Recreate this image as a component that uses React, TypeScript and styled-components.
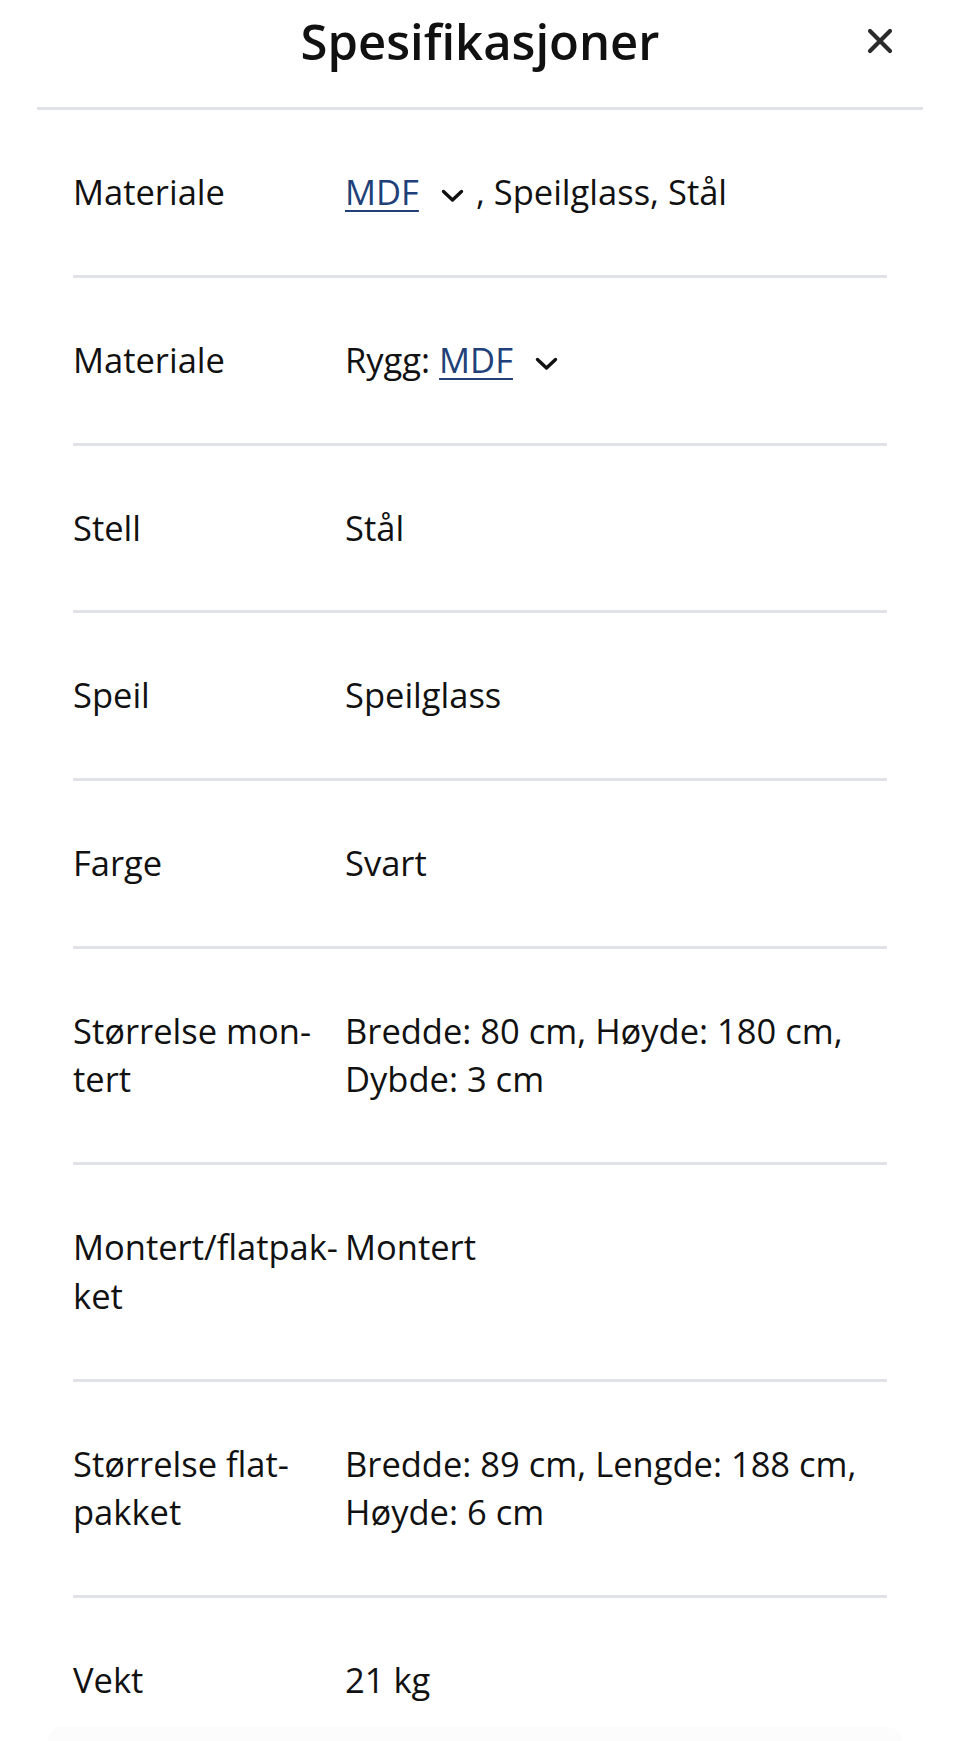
import React from "react";
import styled, { createGlobalStyle } from "styled-components";

const Global = createGlobalStyle`
  html, body { margin: 0; padding: 0; background: #fff; }
  body {
    font-family: "Open Sans", "Noto Sans", "DejaVu Sans", sans-serif;
    color: #111;
    -webkit-font-smoothing: antialiased;
  }
`;

const Page = styled.div`
  width: 960px;
  min-height: 1741px;
  background: #fff;
`;

const Header = styled.header`
  display: grid;
  grid-template-columns: 1fr auto 1fr;
  align-items: center;
  align-content: start;
  padding: 8px 67px 0 67px;
  height: 107px;
  box-sizing: border-box;
`;

const Title = styled.h1`
  grid-column: 2;
  margin: 0;
  font-size: 49px;
  font-weight: 600;
  line-height: 66px;
  color: #111;
`;

const CloseButton = styled.button`
  grid-column: 3;
  justify-self: end;
  width: 26px;
  height: 26px;
  padding: 0;
  border: none;
  background: none;
  display: flex;
  align-items: center;
  justify-content: center;
  color: #2b2b2b;
  cursor: pointer;
`;

const HeaderRule = styled.hr`
  margin: 0 37px;
  border: none;
  height: 3px;
  background: #e1e2e8;
`;

const List = styled.dl`
  margin: 0;
  padding: 0 73px;
`;

const Row = styled.div`
  display: grid;
  grid-template-columns: 272px 1fr;
  padding: 58px 0 58.3px;
  border-bottom: 3px solid #e1e2e8;
  font-size: 34.5px;
  line-height: 48.5px;
`;

const Label = styled.dt`
  margin: 0;
  hyphens: manual;
  padding-right: 4px;
`;

const Value = styled.dd`
  margin: 0;
`;

const Link = styled.a`
  color: #213f78;
  text-decoration: underline;
  text-decoration-thickness: 2px;
  text-underline-offset: 5px;
`;

const ChevronWrap = styled.span<{ $after: number }>`
  display: inline-flex;
  align-items: center;
  margin: 0 ${(p) => p.$after}px 0 22px;
  vertical-align: 2px;
`;

const Footer = styled.div`
  position: fixed;
  left: 48px;
  right: 58px;
  bottom: 0;
  height: 14px;
  background: #fcfcfc;
  border-radius: 18px 18px 0 0;
`;

const Chevron: React.FC<{ after?: number }> = ({ after = 0 }) => (
  <ChevronWrap $after={after}>
    <svg width="23" height="14" viewBox="0 0 23 14" aria-hidden="true">
      <polyline
        points="2.5,2.5 11.5,11 20.5,2.5"
        fill="none"
        stroke="#111"
        strokeWidth="3.4"
        strokeLinecap="round"
        strokeLinejoin="round"
      />
    </svg>
  </ChevronWrap>
);

const CloseIcon = () => (
  <svg width="26" height="26" viewBox="0 0 26 26" aria-hidden="true">
    <path
      d="M3 3 L23 23 M23 3 L3 23"
      stroke="currentColor"
      strokeWidth="4.2"
      strokeLinecap="round"
    />
  </svg>
);

type Spec = { label: string; value: React.ReactNode };

const specs: Spec[] = [
  {
    label: "Materiale",
    value: (
      <>
        <Link href="#">MDF</Link>
        <Chevron after={12} />, Speilglass, Stål
      </>
    ),
  },
  {
    label: "Materiale",
    value: (
      <>
        Rygg: <Link href="#">MDF</Link>
        <Chevron />
      </>
    ),
  },
  { label: "Stell", value: "Stål" },
  { label: "Speil", value: "Speilglass" },
  { label: "Farge", value: "Svart" },
  {
    label: "Størrelse mon\u00ADtert",
    value: "Bredde: 80 cm, Høyde: 180 cm, Dybde: 3 cm",
  },
  { label: "Montert/flatpak\u00ADket", value: "Montert" },
  {
    label: "Størrelse flat\u00ADpakket",
    value: "Bredde: 89 cm, Lengde: 188 cm, Høyde: 6 cm",
  },
  { label: "Vekt", value: "21 kg" },
];

export default function App() {
  return (
    <Page lang="nb">
      <Global />
      <Header>
        <Title>Spesifikasjoner</Title>
        <CloseButton aria-label="Lukk">
          <CloseIcon />
        </CloseButton>
      </Header>
      <HeaderRule />
      <List>
        {specs.map((s, i) => (
          <Row key={i}>
            <Label>{s.label}</Label>
            <Value>{s.value}</Value>
          </Row>
        ))}
      </List>
      <Footer />
    </Page>
  );
}
